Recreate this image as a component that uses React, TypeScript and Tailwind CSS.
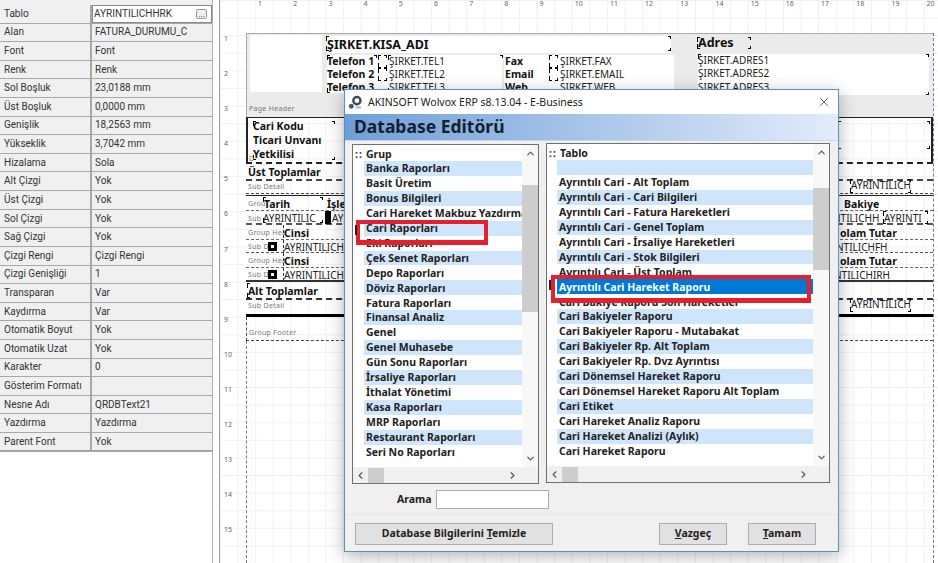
import { ChevronDown, ChevronLeft, ChevronRight, ChevronUp, X } from "lucide-react";
import clsx from "clsx";
import type { ReactNode } from "react";

const props: [string, string][] = [
  ["Tablo", "AYRINTILICHHRK"],
  ["Alan", "FATURA_DURUMU_C"],
  ["Font", "Font"],
  ["Renk", "Renk"],
  ["Sol Boşluk", "23,0188 mm"],
  ["Üst Boşluk", "0,0000 mm"],
  ["Genişlik", "18,2563 mm"],
  ["Yükseklik", "3,7042 mm"],
  ["Hizalama", "Sola"],
  ["Alt Çizgi", "Yok"],
  ["Üst Çizgi", "Yok"],
  ["Sol Çizgi", "Yok"],
  ["Sağ Çizgi", "Yok"],
  ["Çizgi Rengi", "Çizgi Rengi"],
  ["Çizgi Genişliği", "1"],
  ["Transparan", "Var"],
  ["Kaydırma", "Var"],
  ["Otomatik Boyut", "Yok"],
  ["Otomatik Uzat", "Yok"],
  ["Karakter", "0"],
  ["Gösterim Formatı", ""],
  ["Nesne Adı", "QRDBText21"],
  ["Yazdırma", "Yazdırma"],
  ["Parent Font", "Yok"],
];

const groups = [
  "Banka Raporları",
  "Basit Üretim",
  "Bonus Bilgileri",
  "Cari Hareket Makbuz Yazdırma",
  "Cari Raporları",
  "Eki Raporları",
  "Çek Senet Raporları",
  "Depo Raporları",
  "Döviz Raporları",
  "Fatura Raporları",
  "Finansal Analiz",
  "Genel",
  "Genel Muhasebe",
  "Gün Sonu Raporları",
  "İrsaliye Raporları",
  "İthalat Yönetimi",
  "Kasa Raporları",
  "MRP Raporları",
  "Restaurant Raporları",
  "Seri No Raporları",
];

const tables = [
  "",
  "Ayrıntılı Cari - Alt Toplam",
  "Ayrıntılı Cari - Cari Bilgileri",
  "Ayrıntılı Cari - Fatura Hareketleri",
  "Ayrıntılı Cari - Genel Toplam",
  "Ayrıntılı Cari - İrsaliye Hareketleri",
  "Ayrıntılı Cari - Stok Bilgileri",
  "Ayrıntılı Cari - Üst Toplam",
  "Ayrıntılı Cari Hareket Raporu",
  "Cari Bakiye Raporu Son Hareketler",
  "Cari Bakiyeler Raporu",
  "Cari Bakiyeler Raporu - Mutabakat",
  "Cari Bakiyeler Rp. Alt Toplam",
  "Cari Bakiyeler Rp. Dvz Ayrıntısı",
  "Cari Dönemsel Hareket Raporu",
  "Cari Dönemsel Hareket Raporu Alt Toplam",
  "Cari Etiket",
  "Cari Hareket Analiz Raporu",
  "Cari Hareket Analizi (Aylık)",
  "Cari Hareket Raporu",
];

const rulerTop = Array.from({ length: 20 }, (_, i) => i + 1);
const rulerLeft = Array.from({ length: 15 }, (_, i) => i + 1);

// report field on the designer canvas, x/y are relative to its band
function T({ x, y, kind, children }: { x: number; y: number; kind?: "b" | "s" | "h"; children: ReactNode }) {
  return (
    <span
      className={clsx(
        "absolute whitespace-nowrap leading-none",
        kind === "b" && "font-bold text-[10.5px] text-[#111]",
        kind === "h" && "font-bold text-[12.5px] text-[#111]",
        kind === "s" && "text-[7px] text-[#777] tracking-[0.3px]",
        !kind && "text-[10px] text-[#222]"
      )}
      style={{ left: x, top: y }}
    >
      {children}
    </span>
  );
}

function Box({ x, y, w, h, className }: { x: number; y: number; w: number; h: number; className: string }) {
  return <div className={clsx("absolute", className)} style={{ left: x, top: y, width: w, height: h }} />;
}

// selection brackets at the four corners of a field
function Marks({ x, y, w, h }: { x: number; y: number; w: number; h: number }) {
  return (
    <div className="absolute" style={{ left: x, top: y, width: w, height: h }}>
      <span className="absolute left-0 top-0 w-[3px] h-[5px] border-l border-t border-black" />
      <span className="absolute right-0 top-0 w-[3px] h-[3px] border-r border-t border-black" />
      <span className="absolute left-0 bottom-0 w-[3px] h-[5px] border-l border-b border-black" />
      <span className="absolute right-0 bottom-0 w-[3px] h-[3px] border-r border-b border-black" />
    </div>
  );
}

function Band({ h, className, children }: { h: number; className?: string; children: ReactNode }) {
  return (
    <div className={clsx("relative shrink-0", className)} style={{ height: h }}>
      {children}
    </div>
  );
}

function Canvas() {
  return (
    <div className="ml-[220px] w-[718px] h-[563px] overflow-hidden flex flex-col bg-white bg-[linear-gradient(#f0f0f0_1px,transparent_1px),linear-gradient(90deg,#f0f0f0_1px,transparent_1px)] bg-[size:17.6px_17.6px]">
      <div className="h-[33px] shrink-0 flex pl-[38px]">
        {rulerTop.map((n) => (
          <span key={n} className="w-[35.2px] shrink-0 text-[7px] leading-[8px] text-[#666]">
            {n}
          </span>
        ))}
      </div>
      <div className="flex flex-1 min-h-0">
        <div className="w-[26px] shrink-0 pl-[4px] pt-[1px] flex flex-col">
          {rulerLeft.map((n) => (
            <span key={n} className="h-[35.1px] shrink-0 text-[7px] leading-[9px] text-[#666]">
              {n}
            </span>
          ))}
        </div>
        <div className="relative w-[688px] shrink-0 flex flex-col border-r border-dashed border-[#7a70b0]">
          {/* page header */}
          <Band h={84} className="bg-[#e9e9e9]/90 border-t border-l border-[#aaa]">
            <Box x={3} y={1} w={72} h={57} className="bg-white" />
            <Box x={80} y={2} w={344} h={17} className="bg-white" />
            <Box x={80} y={21} w={175} h={38} className="bg-white" />
            <Box x={257} y={21} w={170} h={38} className="bg-white" />
            <Box x={451} y={20} w={231} h={41} className="bg-white" />
            <Marks x={79} y={2} w={345} h={15} />
            <T kind="h" x={80} y={5}>ŞIRKET.KISA_ADI</T>
            <T kind="h" x={451} y={3}>Adres</T>
            <Marks x={450} y={3} w={54} h={12} />
            <Marks x={80} y={21} w={50} h={38} />
            <Marks x={131} y={21} w={9} h={13} />
            <Marks x={131} y={34} w={9} h={13} />
            <Marks x={141} y={21} w={115} h={38} />
            <Marks x={302} y={21} w={9} h={13} />
            <Marks x={302} y={34} w={9} h={13} />
            <Marks x={451} y={20} w={231} h={41} />
            <T kind="b" x={80} y={22}>Telefon 1</T>
            <T kind="b" x={80} y={35}>Telefon 2</T>
            <T kind="b" x={80} y={48}>Telefon 3</T>
            <T x={142} y={22}>ŞIRKET.TEL1</T>
            <T x={142} y={35}>ŞIRKET.TEL2</T>
            <T x={142} y={48}>ŞIRKET.TEL3</T>
            <T kind="b" x={258} y={22}>Fax</T>
            <T kind="b" x={258} y={35}>Email</T>
            <T kind="b" x={258} y={48}>Web</T>
            <T x={313} y={22}>ŞIRKET.FAX</T>
            <T x={313} y={35}>ŞIRKET.EMAIL</T>
            <T x={313} y={48}>ŞIRKET.WEB</T>
            <T x={451} y={21}>ŞIRKET.ADRES1</T>
            <T x={451} y={34}>ŞIRKET.ADRES2</T>
            <T x={451} y={48}>ŞIRKET.ADRES3</T>
            <T kind="s" x={2} y={71}>Page Header</T>
          </Band>

          {/* title band */}
          <Band h={47} className="border-x-2 border-t border-b-2 border-[#222] [border-bottom-style:dashed]">
            <T kind="b" x={5} y={3}>Cari Kodu</T>
            <T kind="b" x={5} y={17}>Ticari Unvanı</T>
            <T kind="b" x={5} y={31}>Yetkilisi</T>
            <Marks x={5} y={3} w={82} h={39} />
            <T kind="s" x={1} y={37}>D</T>
            <Marks x={590} y={3} w={92} h={28} />
          </Band>

          <Band h={32} className="border-b border-[#222]">
            <T kind="b" x={2} y={3}>Üst Toplamlar</T>
            <Box x={0} y={15} w={687} h={1} className="border-t-2 border-dashed border-[#444]" />
            <T kind="s" x={2} y={19}>Sub Detail</T>
            <T x={605} y={16}>AYRINTILICH</T>
            <Marks x={604} y={15} w={61} h={14} />
            <Box x={0} y={29} w={687} h={1} className="border-t border-dashed border-[#444]" />
          </Band>

          {/* detail rows */}
          <Band h={29} className="border-b-2 border-dashed border-[#555]">
            <T kind="s" x={2} y={4}>Grou</T>
            <T kind="b" x={18} y={3}>Tarih</T>
            <T kind="b" x={81} y={3}>İşlem</T>
            <T x={17} y={17}>AYRINTILIC</T>
            <T kind="s" x={2} y={19}>Sub</T>
            <Marks x={17} y={1} w={60} h={26} />
            <Box x={79} y={15} w={6} h={13} className="bg-black" />
            <T x={86} y={17}>AYR</T>
            <Box x={0} y={14} w={687} h={1} className="border-t border-dashed border-[#666]" />
            <T kind="b" x={598} y={3}>Bakiye</T>
            <T x={587} y={17}>NTILICHH</T>
            <T x={638} y={17}>AYRINTI</T>
            <Marks x={637} y={15} w={45} h={13} />
          </Band>
          <Band h={28} className="border-b border-dashed border-[#555]">
            <T kind="s" x={2} y={4}>Group Hea</T>
            <T kind="b" x={38} y={3}>Cinsi</T>
            <T kind="s" x={2} y={18}>Sub D</T>
            <T x={38} y={17}>AYRINTILICH</T>
            <Box x={22} y={17} w={9} h={9} className="border-[3px] border-black bg-white" />
            <Box x={0} y={14} w={687} h={1} className="border-t border-dashed border-[#666]" />
            <Box x={37} y={0} w={1} h={28} className="border-l border-dashed border-[#333]" />
            <T kind="b" x={594} y={3}>olam Tutar</T>
            <T x={590} y={17}>NTILICHFH</T>
          </Band>
          <Band h={29} className="border-b-2 border-[#333]">
            <T kind="s" x={2} y={4}>Group Hea</T>
            <T kind="b" x={38} y={3}>Cinsi</T>
            <T kind="s" x={2} y={18}>Sub D</T>
            <T x={38} y={17}>AYRINTILICH</T>
            <Box x={22} y={17} w={9} h={9} className="border-[3px] border-black bg-white" />
            <Box x={0} y={14} w={687} h={1} className="border-t border-dashed border-[#666]" />
            <Box x={37} y={0} w={1} h={28} className="border-l border-dashed border-[#333]" />
            <T kind="b" x={594} y={3}>olam Tutar</T>
            <T x={588} y={17}>NTILICHIRH</T>
          </Band>

          <Band h={35} className="border-b-[3px] border-black">
            <T kind="b" x={2} y={4}>Alt Toplamlar</T>
            <Marks x={1} y={1} w={100} h={15} />
            <Box x={0} y={16} w={687} h={1} className="border-t-2 border-dashed border-[#333]" />
            <T kind="s" x={2} y={20}>Sub Detail</T>
            <T x={605} y={17}>AYRINTILICH</T>
            <Marks x={604} y={16} w={61} h={14} />
          </Band>
          <Band h={24} className="border-b border-l border-dashed border-[#444]">
            <T kind="s" x={2} y={12}>Group Footer</T>
          </Band>
          <div className="flex-1 border-l border-dashed border-[#7a70b0]" />
        </div>
      </div>
    </div>
  );
}

function PropertyPanel() {
  return (
    <div className="absolute left-0 top-0 w-[213px] h-[563px] bg-white border-r border-[#b0b0b0]">
      <div className="h-[451px] bg-[#f0f0f0] pt-[5px] border-b border-[#a0a0a0]">
        {props.map(([name, value], i) => (
          <div
            key={name}
            className="flex h-[18.62px] border-b border-[#a8a8a8] font-['Roboto',sans-serif] text-[10px] leading-none text-[#333] whitespace-nowrap"
          >
            <div className="w-[92px] shrink-0 flex items-center pl-[4px] border-r-2 border-[#a8a8a8]">{name}</div>
            {i === 0 ? (
              <div className="flex-1 flex items-center justify-between bg-white pl-[1px] pr-[4px] border border-[#888]">
                <span>{value}</span>
                <span className="w-[11px] h-[10px] rounded-[2px] border border-[#999] bg-[#eee] text-[8px] flex items-end justify-center leading-[6px]">
                  ...
                </span>
              </div>
            ) : (
              <div className="flex-1 flex items-center pl-[3px]">{value}</div>
            )}
          </div>
        ))}
      </div>
    </div>
  );
}

function ListBox({
  title,
  items,
  className,
  inset,
  thumb,
  selected,
}: {
  title: string;
  items: string[];
  className: string;
  inset: string;
  thumb: string;
  selected?: number;
}) {
  return (
    <div className={clsx("relative h-[340px] bg-white border border-[#707070] flex flex-col overflow-hidden", className)}>
      <div className="flex flex-1 min-h-0">
        <div className="flex-1 min-w-0 overflow-hidden">
          <div className="h-[16px] pt-[2px] pl-[2px] flex items-center text-[10.5px] font-bold text-[#222] leading-none">
            <span className="w-[9px] text-[#333] tracking-[1px]">::</span>
            <span className="ml-[2px]">{title}</span>
          </div>
          <div className={inset}>
            {items.map((item, i) => (
              <div
                key={i}
                className={clsx(
                  "h-[14.93px] pl-[2px] flex items-center whitespace-nowrap overflow-hidden text-[10.5px] font-bold leading-none",
                  i === selected
                    ? "bg-[#0078d7] text-white"
                    : i % 2 === 0
                      ? "bg-[#cfe5fc] text-[#222]"
                      : "bg-white text-[#222]"
                )}
              >
                {item}
              </div>
            ))}
          </div>
        </div>
        <div className="w-[16px] shrink-0 flex flex-col items-center justify-between bg-[#f8f8f8] py-[3px]">
          <ChevronUp className="w-[11px] h-[11px] text-[#555]" strokeWidth={2.5} />
          <div className={clsx("w-full bg-[#cdcdcd] flex-1", thumb)} />
          <ChevronDown className="w-[11px] h-[11px] text-[#555]" strokeWidth={2.5} />
        </div>
      </div>
      <div className="h-[16px] shrink-0 bg-[#f0f0f0] flex items-center justify-between pr-[20px] pl-[2px]">
        <div className="flex items-center">
          <ChevronLeft className="w-[11px] h-[11px] text-[#555]" strokeWidth={2.5} />
          <div className="ml-[2px] w-[16px] h-[15px] bg-[#cdcdcd]" />
        </div>
        <ChevronRight className="w-[11px] h-[11px] text-[#555]" strokeWidth={2.5} />
      </div>
    </div>
  );
}

function Btn({ width, children }: { width: string; children: ReactNode }) {
  return (
    <div className={clsx("h-[22px] bg-[#e1e1e1] border border-[#adadad] flex items-center justify-center text-[10.5px] font-bold text-[#222]", width)}>
      {children}
    </div>
  );
}

function Dialog() {
  return (
    <div className="absolute left-[344px] top-[89px] w-[495px] h-[463px] bg-[#f0f0f0] border border-[#4f94c4] shadow-[0_4px_16px_rgba(0,0,0,0.3)] flex flex-col">
      <div className="relative h-[24px] shrink-0 bg-white flex items-center pl-[3px] gap-[5px]">
        <svg viewBox="0 0 16 16" className="w-[15px] h-[15px] shrink-0">
          <circle cx="9.5" cy="6" r="3.8" fill="none" stroke="#3f4a57" strokeWidth="2.6" />
          <circle cx="3.5" cy="12" r="2.6" fill="#3f5a77" />
          <rect x="8" y="12" width="6" height="2.5" fill="#b9bec4" />
        </svg>
        <span className="text-[10.5px] text-[#222] leading-none">AKINSOFT Wolvox ERP s8.13.04 - E-Business</span>
        <X className="absolute right-[7px] top-[5px] w-[14px] h-[14px] text-[#333]" strokeWidth={1.3} />
      </div>
      <div className="h-[27px] shrink-0 bg-[linear-gradient(90deg,#6f9fd8,#e2ecfb)] pl-[9px] flex items-center border-b border-[#c9d7ea]">
        <span className="text-[17.5px] font-bold text-[#15202e] leading-none">Database Editörü</span>
      </div>
      <div className="flex gap-[7px] pl-[7px] pt-[3px]">
        <ListBox title="Grup" items={groups} className="w-[187px]" inset="pl-[11px]" thumb="mt-[26px] mb-[141px]" />
        <ListBox
          title="Tablo"
          items={tables}
          className="w-[284px] -mt-px"
          inset="pl-[10px]"
          thumb="mt-[30px] mb-[182px]"
          selected={8}
        />
      </div>
      <div className="flex items-center pt-[6px] pl-[52px] gap-[5px]">
        <span className="w-[34px] text-[10.5px] font-bold text-[#222]">Arama</span>
        <div className="w-[113px] h-[19px] bg-white border border-[#adadad]" />
      </div>
      <div className="mt-[5px] pt-[8px] pl-[10px] pr-[22px] flex border-t border-[#e6e6e6]">
        <Btn width="w-[198px]">
          <span>
            Database Bilgilerini <u>T</u>emizle
          </span>
        </Btn>
        <div className="flex-1" />
        <Btn width="w-[68px]">
          <span>
            <u>V</u>azgeç
          </span>
        </Btn>
        <div className="w-[21px]" />
        <Btn width="w-[68px]">
          <span>
            <u>T</u>amam
          </span>
        </Btn>
      </div>
      {/* annotation rectangles drawn over the lists */}
      <div className="absolute left-[11px] top-[130px] w-[132px] h-[25px] border-[4px] border-b-[5px] border-[#e5202e]" />
      <div className="absolute left-[206px] top-[185px] w-[260px] h-[28px] border-[4px] border-b-[5px] border-[#e5202e]" />
      <div className="absolute left-[10px] top-[135px] w-[1.5px] h-[10px] bg-[#222]" />
      <div className="absolute left-[204px] top-[190px] w-[1.5px] h-[10px] bg-[#222]" />
    </div>
  );
}

export default function App() {
  return (
    <div className="relative w-[938px] h-[563px] overflow-hidden bg-white font-['Noto_Sans','Open_Sans',sans-serif]">
      <PropertyPanel />
      <Canvas />
      <div className="absolute left-[219px] top-0 w-px h-[563px] bg-[#a0a0a0]" />
      <Dialog />
    </div>
  );
}
